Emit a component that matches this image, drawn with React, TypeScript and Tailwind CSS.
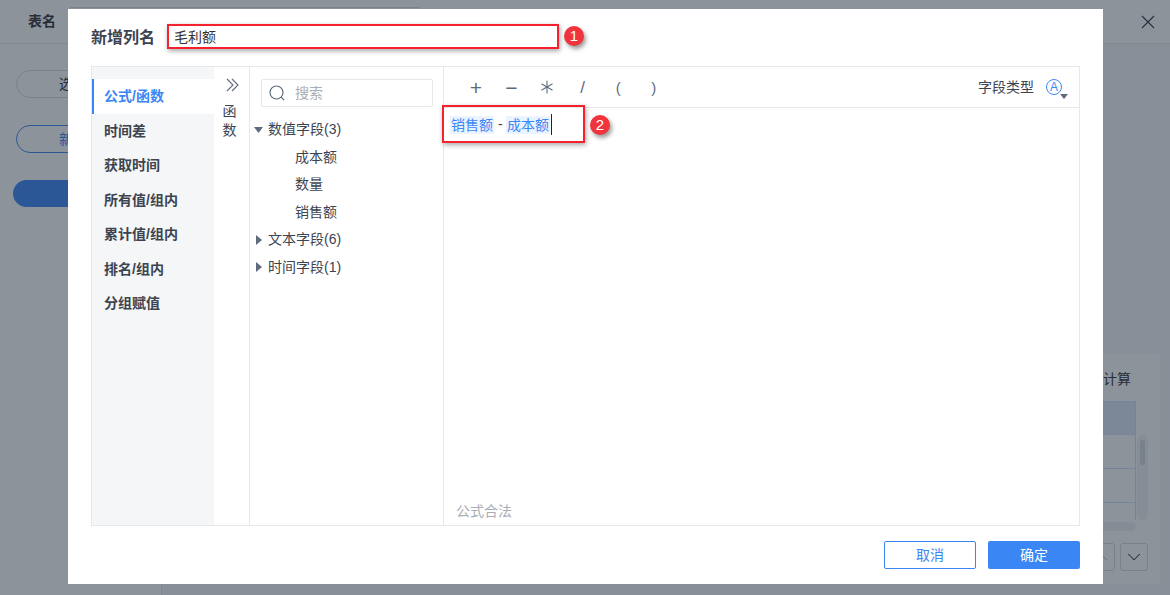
import { Asterisk, ChevronDown, ChevronUp } from "lucide-react";

const FONT = "font-['Liberation_Sans','Noto_Sans_CJK_SC',sans-serif]";

const menus = ["公式/函数", "时间差", "获取时间", "所有值/组内", "累计值/组内", "排名/组内", "分组赋值"];

const Caret = ({ open }: { open?: boolean }) => (
  <svg width="10" height="10" viewBox="0 0 10 10" className="shrink-0">
    <path d={open ? "M0 2h9L4.500 8z" : "M2 0v10l6-5z"} fill="#5f6b7d" />
  </svg>
);

const Badge = ({ n, className }: { n: number; className: string }) => (
  <div
    className={`absolute flex h-5 w-5 items-center justify-center rounded-full bg-[#f0343c] text-[15px] text-white shadow-[2px_3px_4px_rgba(0,0,0,0.4)] ${className}`}>
    {n}
  </div>
);

const Background = () => (
  <div className="relative flex h-[595px] flex-col bg-white">
    <div className="absolute left-[70px] top-[7px] h-[1px] w-[350px] bg-[#dcdcdc]" />
    <div className="flex h-11 shrink-0 items-center justify-between border-b border-[#e8e8e8] pl-7 pr-[15px]">
      <span className="text-[14px] font-bold text-[#333]">表名</span>
      <svg width="14" height="14" viewBox="0 0 14 14" fill="none" stroke="#2e3644" strokeWidth="1.100">
        <path d="M1 1l12 12M13 1L1 13" />
      </svg>
    </div>
    <div className="flex min-h-0 flex-1">
      <div className="flex w-[162px] shrink-0 flex-col gap-[27px] border-r border-[#e8e8e8] px-4 pt-[26px]">
        <div className="h-7 rounded-full border border-[#d8dce2] pl-[42px] text-[14px] leading-[26px] text-[#333]">选</div>
        <div className="h-7 rounded-full border border-[#3a86f5] pl-[42px] text-[14px] leading-[26px] text-[#3a86f5]">新</div>
        <div className="-ml-[3px] h-[27px] rounded-full bg-[#3a86f5]" />
      </div>
      <div className="flex flex-1 justify-end bg-[#f6f7f9] pb-[11px] pr-[10px] pt-[310px]">
        <div className="flex w-[300px] flex-col items-end bg-white pr-[12px]">
          <div className="pr-[17px] pt-[15px] text-[14px] text-[#333]">计算</div>
          <div className="mt-[11px] flex w-full">
            <div className="w-full">
              <div className="h-[34px] border border-[#cfe0f8] bg-[#dde8f8]" />
              <div className="h-[34px] border-x border-b border-[#cfe0f8]" />
              <div className="h-[34px] border-x border-b border-[#cfe0f8]" />
              <div className="h-[17px] border-x border-[#cfe0f8]" />
            </div>
            <div className="ml-[1px] mt-[34px] h-[85px] w-[11px] shrink-0 rounded-full bg-[#f1f2f4] px-[3px] py-[5px]">
              <div className="h-[25px] rounded-full bg-[#d5d8dc]" />
            </div>
          </div>
          <div className="mr-[12px] mt-[2px] h-[9px] w-[288px] rounded-full bg-[#eff0f2]" />
          <div className="mt-[12px] flex gap-[5px]">
            <div className="flex h-7 w-7 items-center justify-center rounded-[3px] border border-[#d5d8dc] text-[#aaa]">
              <ChevronUp size={22} strokeWidth={1} />
            </div>
            <div className="flex h-7 w-7 items-center justify-center rounded-[3px] border border-[#d5d8dc] text-[#333]">
              <ChevronDown size={22} strokeWidth={1.100} />
            </div>
          </div>
        </div>
      </div>
    </div>
  </div>
);

const Dialog = () => (
  <div className="relative flex h-[575px] w-[1035px] flex-col bg-white">
    {/* 标题行 */}
    <div className="flex h-[57px] shrink-0 items-center pl-[23px]">
      <span className="text-[16px] font-bold text-[#3d4450]">新增列名</span>
      <span className="ml-[19px] text-[14px] text-[#333]">毛利额</span>
    </div>

    <div className="mx-[23px] flex h-[460px] shrink-0 border border-[#e8e8e8]">
      {/* 左侧分类 */}
      <div className="w-[122px] shrink-0 bg-[#f5f6f8] pt-3">
        {menus.map((m, i) => (
          <div
            key={m}
            className={
              i === 0
                ? "flex h-[35px] items-center border-l-2 border-[#3a86f5] bg-white pl-[10px] text-[14px] font-bold text-[#3a86f5]"
                : "flex h-[34.500px] items-center pl-3 text-[14px] font-bold text-[#3d4450]"
            }>
            {m}
          </div>
        ))}
      </div>

      {/* 函数折叠 */}
      <div className="flex w-9 shrink-0 flex-col items-center border-r border-[#e8e8e8] pt-[11px] text-[14px] leading-[19px] text-[#3d4450]">
        <svg width="14" height="14" viewBox="0 0 14 14" fill="none" stroke="#5f6b7d" strokeWidth="1.100" className="ml-[1px]">
          <path d="M2 1l6 6-6 6M7 1l6 6-6 6" />
        </svg>
        <span className="mr-[4px] mt-[10px]">函</span>
        <span className="mr-[4px]">数</span>
      </div>

      {/* 字段树 */}
      <div className="w-[194px] shrink-0 border-r border-[#e8e8e8] pt-3">
        <div className="ml-[11px] mr-[10px] flex h-[28px] items-center rounded-[2px] border border-[#e8e8e8] pl-[6px]">
          <svg width="18" height="18" viewBox="0 0 18 18" fill="none" stroke="#5f6b7d" strokeWidth="1.200">
            <circle cx="8.500" cy="8.500" r="6.500" />
            <path d="M13.200 13.200l3 3" />
          </svg>
          <span className="ml-[9px] text-[14px] text-[#a9adb5]">搜索</span>
        </div>
        <div className="mt-[9px] text-[14px] text-[#3d4450]">
          <div className="flex h-[27.500px] items-center gap-[4px] pl-1">
            <Caret open />
            数值字段(3)
          </div>
          <div className="flex h-[27.500px] items-center pl-[45px]">成本额</div>
          <div className="flex h-[27.500px] items-center pl-[45px]">数量</div>
          <div className="flex h-[27.500px] items-center pl-[45px]">销售额</div>
          <div className="flex h-[27.500px] items-center gap-[4px] pl-1">
            <Caret />
            文本字段(6)
          </div>
          <div className="flex h-[27.500px] items-center gap-[4px] pl-1">
            <Caret />
            时间字段(1)
          </div>
        </div>
      </div>

      {/* 公式编辑 */}
      <div className="flex min-w-0 flex-1 flex-col">
        <div className="flex h-[41px] shrink-0 items-center border-b border-[#e8e8e8] pr-[8px]">
          <div className="flex items-center pl-[14px] leading-none text-[#5f6b7d]">
            <span className="flex w-[35.600px] justify-center text-[21px]">+</span>
            <span className="flex w-[35.600px] justify-center text-[21px]">−</span>
            <span className="flex w-[35.600px] justify-center">
              <Asterisk size={24} strokeWidth={1.100} />
            </span>
            <span className="flex w-[35.600px] justify-center text-[17px]">/</span>
            <span className="flex w-[35.600px] justify-center text-[15px]">(</span>
            <span className="flex w-[35.600px] justify-center text-[15px]">)</span>
          </div>
          <span className="ml-auto text-[14px] text-[#3d4450]">字段类型</span>
          <div className="relative ml-[12px] mr-[9px] flex h-4 w-4 items-center justify-center rounded-full border border-[#3a86f5] text-[12px] leading-none text-[#3a86f5]">
            A
            <svg width="8" height="5" viewBox="0 0 8 5" className="absolute -bottom-[5px] -right-[7px]">
              <path d="M0 0h8L4 5z" fill="#5f6b7d" />
            </svg>
          </div>
        </div>
        <div className="flex flex-1 flex-col justify-between">
          <div className="flex items-center pl-[6px] pt-[6px] text-[14px] text-[#3a86f5]">
            <span className="h-[18px] bg-[#eaf3ff] px-[1px] leading-[18px]">销售额</span>
            <span className="mx-[4px] w-[3px] text-[#3d4450]">-</span>
            <span className="ml-[1px] h-[18px] bg-[#eaf3ff] px-[1px] leading-[18px]">成本额</span>
            <span className="ml-[1px] h-[21px] w-[1px] bg-[#222]" />
          </div>
          <div className="pb-[3px] pl-3 text-[14px] text-[#a9adb5]">公式合法</div>
        </div>
      </div>
    </div>

    {/* 底部按钮 */}
    <div className="flex flex-1 justify-end gap-3 pr-[23px] pt-[15px]">
      <button className="h-7 w-[92px] rounded-[2px] border border-[#3a86f5] bg-white text-[14px] text-[#3a86f5]">取消</button>
      <button className="h-7 w-[92px] rounded-[2px] bg-[#3a86f5] text-[14px] text-white">确定</button>
    </div>

    {/* 标注 */}
    <div className="absolute left-[99px] top-[15px] h-[25px] w-[392px] border-2 border-[#f5222d] shadow-[1px_2px_5px_rgba(0,0,0,0.35)]" />
    <Badge n={1} className="left-[496px] top-[17px]" />
    <div className="absolute left-[374px] top-[96px] h-[38px] w-[143px] border-2 border-[#f5222d] shadow-[1px_2px_5px_rgba(0,0,0,0.35)]" />
    <Badge n={2} className="left-[522px] top-[106px]" />
  </div>
);

export default function App() {
  return (
    <div className={`relative h-[595px] w-[1170px] overflow-hidden ${FONT}`}>
      <Background />
      <div className="absolute inset-0 bg-[#1c2738]/50 pl-[68px] pt-[9px]">
        <Dialog />
      </div>
    </div>
  );
}
